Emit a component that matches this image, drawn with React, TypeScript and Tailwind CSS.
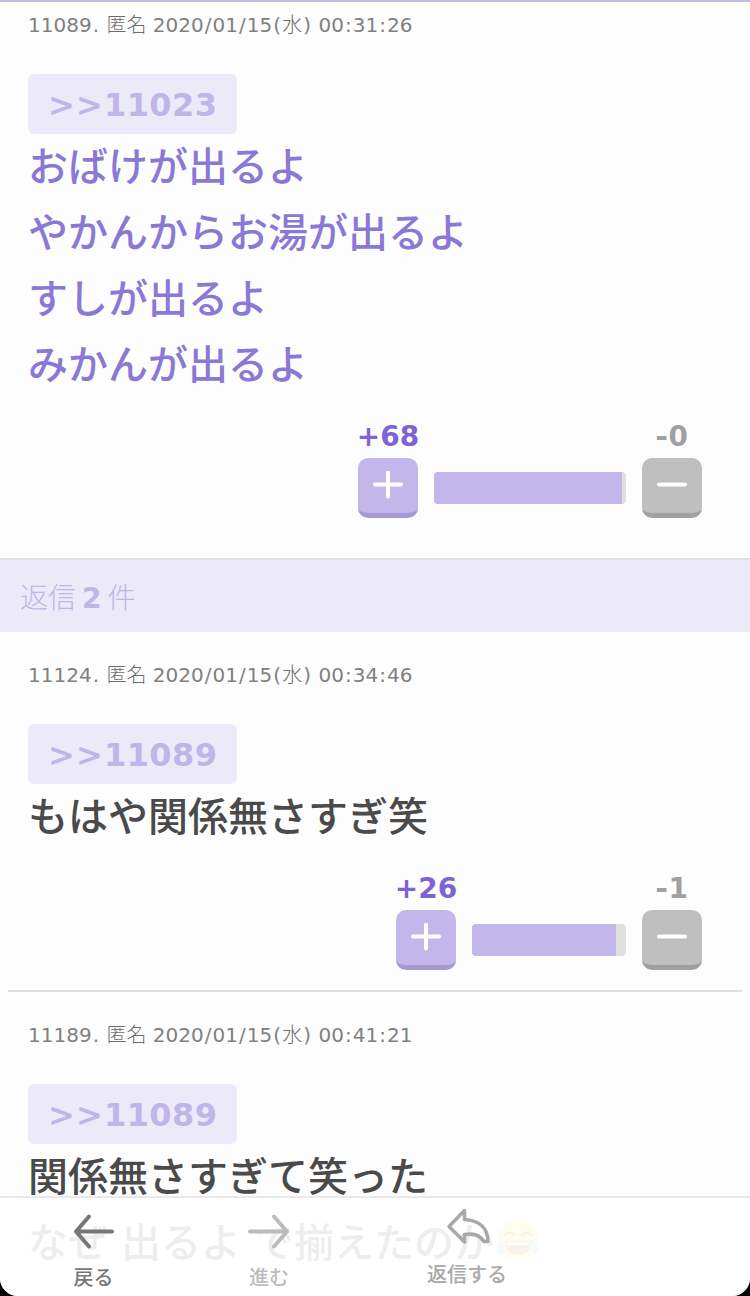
import React from 'react';

interface CommentData {
    no: string;
    date: string;
    anchor: string;
    lines: React.ReactNode[];
    plus?: number;
    minus?: number;
    barClass?: string;
    fillClass?: string;
}

const LaughEmoji: React.FC = () => (
    <svg viewBox="0 0 44 44" className="ml-0.5 w-[44px] h-[44px] shrink-0">
        <circle cx="22" cy="22" r="20" fill="#fbdf6b" />
        <path d="M9 17q4-5 9 0M26 17q5-5 9 0" fill="none" stroke="#b98a3a" strokeWidth="2.5" strokeLinecap="round" />
        <path d="M9 23h26q-1 14-13 14T9 23z" fill="#c9743a" />
        <path d="M11 24h22v3H11z" fill="#fff" />
        <path d="M13 33q9-5 18 0-9 8-18 0z" fill="#ef7350" />
        <path d="M9 22q-8 3-8 9t5 5q4-3 3-14zM35 22q8 3 8 9t-5 5q-4-3-3-14z" fill="#8dcbf2" />
    </svg>
);

const mainComment: CommentData = {
    no: '11089',
    date: '2020/01/15(水) 00:31:26',
    anchor: '>>11023',
    lines: ['おばけが出るよ', 'やかんからお湯が出るよ', 'すしが出るよ', 'みかんが出るよ'],
    plus: 68,
    minus: 0,
    barClass: 'w-[192px]',
    fillClass: 'w-[188px]',
};

const replies: CommentData[] = [
    {
        no: '11124',
        date: '2020/01/15(水) 00:34:46',
        anchor: '>>11089',
        lines: ['もはや関係無さすぎ笑'],
        plus: 26,
        minus: 1,
        barClass: 'w-[154px]',
        fillClass: 'w-[144px]',
    },
    {
        no: '11189',
        date: '2020/01/15(水) 00:41:21',
        anchor: '>>11089',
        lines: ['関係無さすぎて笑った', <>なぜ 出るよ で揃えたのか<LaughEmoji /></>],
    },
];

// separators get a little air on both sides, kanji are set lighter than the digits
const MetaLine: React.FC<{ text: string }> = ({ text }) => (
    <p className="h-5 leading-[22px] pl-7 text-[20px] text-[#808080] whitespace-pre">
        {text.split(/([/:.()]|匿名|水)/).map((part, i) =>
            i % 2 ? (
                <span key={i} className={/[/:.()]/.test(part) ? 'px-[1.05px]' : 'font-light text-[#6c6c6c]'}>{part}</span>
            ) : part
        )}
    </p>
);

const VoteRow: React.FC<{ comment: CommentData }> = ({ comment }) => (
    <div className="flex justify-end items-end mt-[23px] pr-12">
        <div className="w-[60px] flex flex-col items-center">
            <span className="h-9 leading-[38px] mb-1 text-[28px] font-bold text-[#7e63d6] whitespace-nowrap">+{comment.plus}</span>
            <button className="w-[60px] h-[60px] rounded-[10px] bg-[#c3b6ea] border-b-[5px] border-[#a598d4] flex items-center justify-center">
                <svg viewBox="0 0 30 30" className="w-[30px] h-[30px]" stroke="#fff" strokeWidth="4" strokeLinecap="round">
                    <path d="M2 13.500h26M15 1.500v24" />
                </svg>
            </button>
        </div>
        <div className={`h-8 mx-4 mb-[14px] rounded bg-[#e0e0e0] overflow-hidden ${comment.barClass}`}>
            <div className={`h-8 bg-[#c3b6ea] ${comment.fillClass}`} />
        </div>
        <div className="w-[60px] flex flex-col items-center">
            <span className="h-9 leading-[38px] mb-1 text-[28px] font-bold text-[#a0a0a0] whitespace-nowrap">
                <span className="inline-block scale-x-110 pr-px">-</span>{comment.minus}
            </span>
            <button className="w-[60px] h-[60px] rounded-[10px] bg-[#bfbfbf] border-b-[5px] border-[#a0a0a0] flex items-center justify-center">
                <svg viewBox="0 0 30 30" className="w-[30px] h-[30px]" stroke="#fff" strokeWidth="4" strokeLinecap="round">
                    <path d="M2 13.500h26" />
                </svg>
            </button>
        </div>
    </div>
);

const Comment: React.FC<{ comment: CommentData; main?: boolean }> = ({ comment, main }) => (
    <article className={main ? 'pt-3 pb-10' : 'pt-8 pb-5'}>
        <MetaLine text={`${comment.no}. 匿名 ${comment.date}`} />
        <div className="mt-10 ml-7 pl-5 w-[209px] h-[60px] rounded-md bg-[#ece9f8] text-[#c0b5e8] text-[32px] tracking-[0.4px] leading-[62px] font-bold">
            <span className="tracking-[1.2px]">&gt;&gt;</span>{comment.anchor.slice(2)}
        </div>
        <div className={`-mt-[3px] pl-7 font-['Noto_Sans_CJK_JP',sans-serif] text-[40px] font-medium [word-spacing:4px] ${main ? 'text-[#8b78d6]' : 'text-[#4a4a4a]'}`}>
            {comment.lines.map((line, i) => (
                <p key={i} className="h-[66px] leading-[66px] flex items-center whitespace-pre">{line}</p>
            ))}
        </div>
        {comment.plus !== undefined && <VoteRow comment={comment} />}
    </article>
);

const BottomNav: React.FC = () => (
    <nav className="absolute inset-x-0 bottom-0 h-[100px] border-t-2 border-[#e9e9e9] bg-white/90 flex font-['Noto_Sans_CJK_JP',sans-serif] text-[20px] leading-6 font-medium">
        <div className="w-[187px] pt-3 flex flex-col items-center text-[#777]">
            <svg viewBox="0 0 42 42" className="w-[42px] h-[42px]" fill="none" stroke="currentColor" strokeWidth="4" strokeLinecap="round">
                <path d="M39 21.5H3M16 6.500L3 21.5l13 15" strokeLinejoin="round" />
            </svg>
            <span className="mt-[13px]">戻る</span>
        </div>
        <div className="w-[164px] pt-3 flex flex-col items-center text-[#bcbcbc]">
            <svg viewBox="0 0 42 42" className="w-[42px] h-[42px]" fill="none" stroke="currentColor" strokeWidth="4" strokeLinecap="round">
                <path d="M2 21.5h37M26 6.500l13 15-13 15" strokeLinejoin="round" />
            </svg>
            <span className="mt-[13px]">進む</span>
        </div>
        <div className="w-[232px] pt-[9px] flex flex-col items-center text-[#a8a8a8]">
            <svg viewBox="0 0 44 42" className="ml-[2px] w-[44px] h-[42px]" fill="none" stroke="currentColor" strokeWidth="3.5" strokeLinejoin="round">
                <path d="M18.500 3.500L3 19.500l15.500 15.500V27.500C27 26 34 28 38 34.500H42C42 21.500 34 13.500 18.500 12.500z" />
            </svg>
            <span className="mt-[13px]">返信する</span>
        </div>
    </nav>
);

const App: React.FC = () => (
    <div className="bg-black">
        <div className="relative w-full h-[1296px] overflow-hidden rounded-b-[18px] bg-[#fdfdfd] border-t-2 border-[#c5bce3] font-['DejaVu_Sans','Noto_Sans_CJK_JP',sans-serif]">
            <Comment comment={mainComment} main />

            <h2 className="h-[74px] border-t-2 border-[#e0dfe8] bg-[#ece9f8] pl-5 pt-1.5 leading-[68px] text-[28px] font-light text-[#c0b5e8] whitespace-nowrap flex items-center">
                返信<b className="font-bold mx-[6px]">2</b>件
            </h2>

            {replies.map((reply, i) => (
                <React.Fragment key={reply.no}>
                    {i > 0 && <hr className="mx-2 border-0 h-[2px] bg-[#dfdfdf]" />}
                    <Comment comment={reply} />
                </React.Fragment>
            ))}

            <BottomNav />
        </div>
    </div>
);

export default App;
